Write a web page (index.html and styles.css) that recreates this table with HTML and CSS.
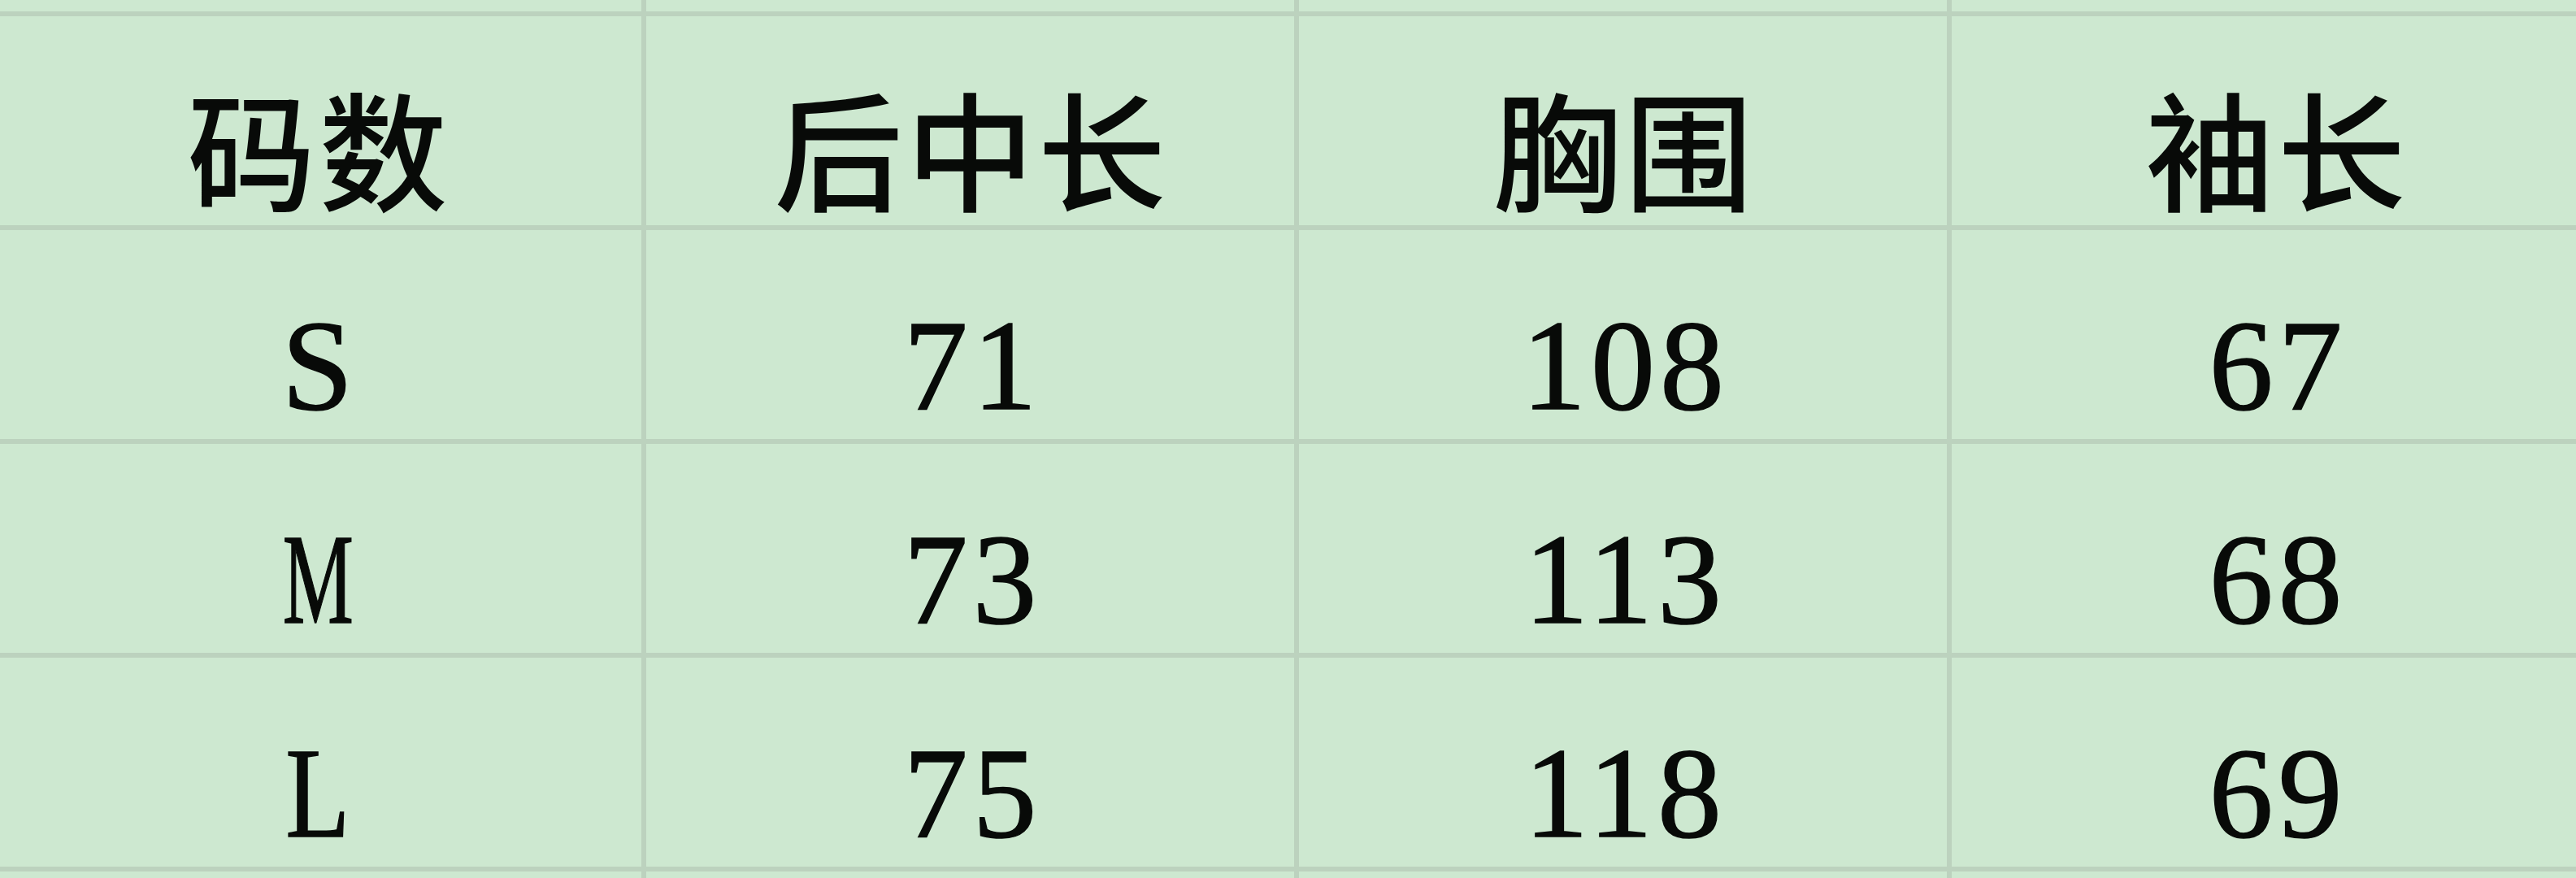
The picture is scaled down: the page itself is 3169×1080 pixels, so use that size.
FILE: index.html
```html
<!DOCTYPE html>
<html lang="zh-CN">
<head>
<meta charset="utf-8">
<title>尺码表</title>
<link rel="stylesheet" href="styles.css">
</head>
<body>
<div class="sheet">
  <div class="cell"></div><div class="cell"></div><div class="cell"></div><div class="cell"></div>

  <div class="cell head">码数</div>
  <div class="cell head">后中长</div>
  <div class="cell head">胸围</div>
  <div class="cell head">袖长</div>

  <div class="cell val">S</div>
  <div class="cell val">71</div>
  <div class="cell val">108</div>
  <div class="cell val">67</div>

  <div class="cell val"><span class="narrow">M</span></div>
  <div class="cell val">73</div>
  <div class="cell val">113</div>
  <div class="cell val">68</div>

  <div class="cell val"><span class="slim">L</span></div>
  <div class="cell val">75</div>
  <div class="cell val">118</div>
  <div class="cell val">69</div>

  <div class="cell"></div><div class="cell"></div><div class="cell"></div><div class="cell"></div>
</div>
</body>
</html>
```

FILE: styles.css
```css
html, body {
  margin: 0;
  padding: 0;
  height: 100%;
  overflow: hidden;
  background: #cde8d0;
}

.sheet {
  display: grid;
  grid-template-columns: repeat(4, 797px);
  grid-template-rows: 14px repeat(4, 257px) 40px;
  gap: 6px;
  background: #bcd2be;
  margin-left: -8px;
  width: max-content;
}

.cell {
  background: #cde8d0;
  display: flex;
  justify-content: center;
  align-items: center;
  color: #080a08;
  box-sizing: border-box;
}

.head {
  font-family: "Noto Sans CJK SC", sans-serif;
  font-size: 158px;
  font-weight: 500;
  line-height: 1;
  letter-spacing: 4px;
  padding-left: 4px;
  padding-top: 62px;
}

.val {
  font-family: "Liberation Serif", serif;
  font-size: 158px;
  line-height: 1;
  letter-spacing: 6px;
  padding-left: 6px;
  padding-top: 76px;
  -webkit-text-stroke: 1.5px #080a08;
}

.narrow {
  display: inline-block;
  transform: scaleX(0.62);
}

.slim {
  display: inline-block;
  transform: scaleX(0.82);
}
```
